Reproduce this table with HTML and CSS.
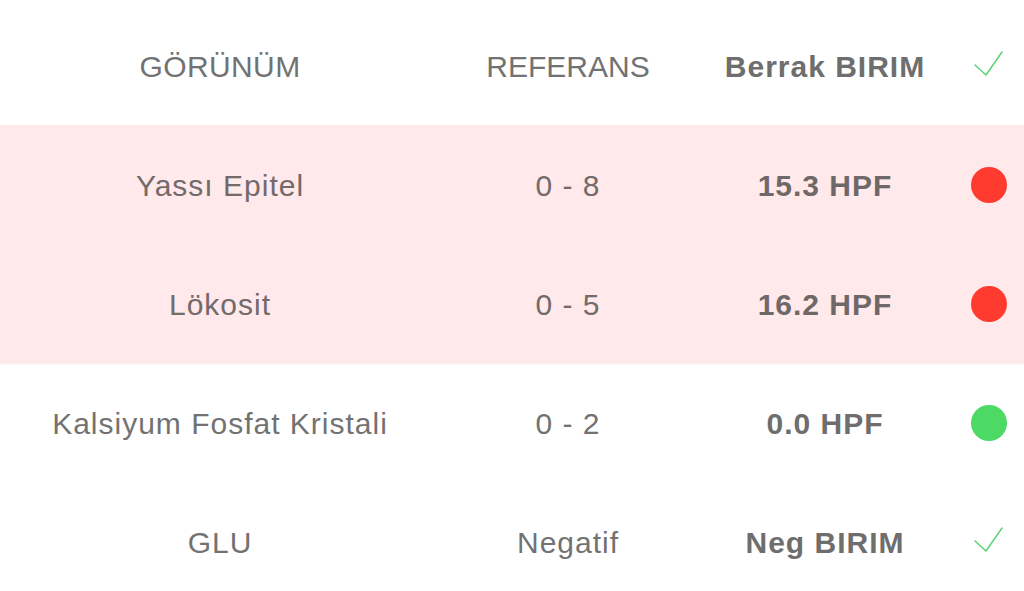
FILE: index.html
```html
<!DOCTYPE html>
<html lang="tr">
<head>
<meta charset="utf-8">
<link rel="stylesheet" href="styles.css">
</head>
<body>
<div class="table">
  <div class="row head">
    <div class="cell name">GÖRÜNÜM</div>
    <div class="cell ref">REFERANS</div>
    <div class="cell val">Berrak BIRIM</div>
    <div class="cell status"><svg class="check" viewBox="0 0 30 26" width="30" height="26"><path d="M1 14 L12 24 L28 1" fill="none" stroke="#5cd37a" stroke-width="1.5" stroke-linecap="round" stroke-linejoin="round"/></svg></div>
  </div>
  <div class="row alert">
    <div class="cell name">Yassı Epitel</div>
    <div class="cell ref">0 - 8</div>
    <div class="cell val">15.3 HPF</div>
    <div class="cell status"><span class="dot red"></span></div>
  </div>
  <div class="row alert">
    <div class="cell name">Lökosit</div>
    <div class="cell ref">0 - 5</div>
    <div class="cell val">16.2 HPF</div>
    <div class="cell status"><span class="dot red"></span></div>
  </div>
  <div class="row after-alert">
    <div class="cell name">Kalsiyum Fosfat Kristali</div>
    <div class="cell ref">0 - 2</div>
    <div class="cell val">0.0 HPF</div>
    <div class="cell status"><span class="dot green"></span></div>
  </div>
  <div class="row">
    <div class="cell name">GLU</div>
    <div class="cell ref">Negatif</div>
    <div class="cell val">Neg BIRIM</div>
    <div class="cell status"><svg class="check" viewBox="0 0 30 26" width="30" height="26"><path d="M1 14 L12 24 L28 1" fill="none" stroke="#5cd37a" stroke-width="1.5" stroke-linecap="round" stroke-linejoin="round"/></svg></div>
  </div>
</div>
</body>
</html>
```

FILE: styles.css
```css
html, body {
  margin: 0;
  padding: 0;
  background: #ffffff;
  overflow: hidden;
}
body {
  font-family: "Liberation Sans", Arial, sans-serif;
  color: #727272;
}
.table {
  display: flex;
  flex-direction: column;
  padding-top: 6px;
}
.row {
  display: grid;
  grid-template-columns: 440px 256px 258px 70px;
  height: 119px;
  align-items: center;
}
.row.alert {
  background: #ffe9ea;
  color: #736a6a;
}
.row.after-alert {
  box-shadow: inset 0 3px 3px -3px rgba(230, 180, 180, 0.5);
}
.cell {
  text-align: center;
  font-size: 30px;
  letter-spacing: 1px;
  white-space: nowrap;
  padding-top: 3px;
}
.head .name {
  letter-spacing: 0.4px;
}
.head .ref {
  letter-spacing: 0;
}
.val {
  font-weight: bold;
  color: #6e6e6e;
}
.alert .val {
  color: #6f6868;
}
.status {
  display: flex;
  justify-content: center;
  align-items: center;
  padding-top: 0;
}
.check {
  display: block;
  margin-top: -4px;
}
.dot {
  display: block;
  width: 36px;
  height: 36px;
  border-radius: 50%;
}
.dot.red {
  background: #ff3b30;
}
.dot.green {
  background: #4cd964;
}
```
